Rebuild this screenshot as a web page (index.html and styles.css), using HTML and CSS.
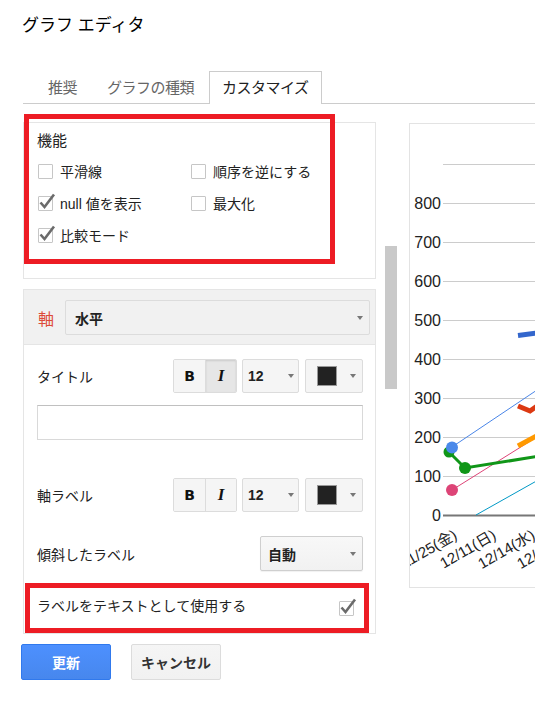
FILE: index.html
```html
<!DOCTYPE html>
<html lang="ja">
<head>
<meta charset="utf-8">
<title>グラフ エディタ</title>
<link rel="stylesheet" href="styles.css">
</head>
<body>
<div class="dialog">
  <h1 class="title">グラフ エディタ</h1>
  <div class="tabs">
    <div class="tab">推奨</div>
    <div class="tab">グラフの種類</div>
    <div class="tab active">カスタマイズ</div>
  </div>

  <div class="main">
    <div class="left">
      <section class="panel features">
        <div class="sec-title">機能</div>
        <div class="checks">
          <div class="check"><span class="box"></span><span>平滑線</span></div>
          <div class="check"><span class="box"></span><span>順序を逆にする</span></div>
          <div class="check"><span class="box"><svg class="tick" width="20" height="20" viewBox="0 0 20 20"><path d="M3.5 10.5 L7.5 15 L17 2.5"/></svg></span><span><span class="latin">null</span> 値を表示</span></div>
          <div class="check"><span class="box"></span><span>最大化</span></div>
          <div class="check"><span class="box"><svg class="tick" width="20" height="20" viewBox="0 0 20 20"><path d="M3.5 10.5 L7.5 15 L17 2.5"/></svg></span><span>比較モード</span></div>
        </div>
      </section>

      <section class="panel axis">
        <div class="axis-head">
          <span class="axis-label">軸</span>
          <div class="select wide"><span>水平</span><i class="arrow"></i></div>
        </div>
        <div class="axis-body">
          <div class="row">
            <span>タイトル</span>
            <div class="tools">
              <div class="btn-group">
                <span class="tbtn"><b class="glyph-b">B</b></span>
                <span class="tbtn pressed"><i class="glyph-i">I</i></span>
              </div>
              <div class="select size-sel"><span>12</span><i class="arrow"></i></div>
              <div class="select color-sel"><span class="swatch"></span><i class="arrow"></i></div>
            </div>
          </div>
          <div class="text-input"></div>
          <div class="row row-gap">
            <span>軸ラベル</span>
            <div class="tools">
              <div class="btn-group">
                <span class="tbtn"><b class="glyph-b">B</b></span>
                <span class="tbtn"><i class="glyph-i">I</i></span>
              </div>
              <div class="select size-sel"><span>12</span><i class="arrow"></i></div>
              <div class="select color-sel"><span class="swatch"></span><i class="arrow"></i></div>
            </div>
          </div>
          <div class="row row-slant">
            <span>傾斜したラベル</span>
            <div class="select slant-sel"><span>自動</span><i class="arrow"></i></div>
          </div>
          <div class="row row-check">
            <span>ラベルをテキストとして使用する</span>
            <span class="box box-end"><svg class="tick" width="20" height="20" viewBox="0 0 20 20"><path d="M3.5 10.5 L7.5 15 L17 2.5"/></svg></span>
          </div>
        </div>
      </section>
    </div>

    <div class="scrollbar"><div class="thumb"></div></div>

    <div class="chart">
      <svg class="chart-svg" width="198" height="463" viewBox="0 0 198 463">
        <g transform="translate(-410,-124)">
          <g class="grid">
            <line x1="443" x2="620" y1="164.5" y2="164.5"/>
            <line x1="443" x2="620" y1="203.5" y2="203.5"/>
            <line x1="443" x2="620" y1="242.5" y2="242.5"/>
            <line x1="443" x2="620" y1="281.5" y2="281.5"/>
            <line x1="443" x2="620" y1="320.5" y2="320.5"/>
            <line x1="443" x2="620" y1="359.5" y2="359.5"/>
            <line x1="443" x2="620" y1="398.5" y2="398.5"/>
            <line x1="443" x2="620" y1="437.5" y2="437.5"/>
            <line x1="443" x2="620" y1="476.5" y2="476.5"/>
          </g>
          <g class="ylabels">
            <text x="441" y="209">800</text>
            <text x="441" y="248">700</text>
            <text x="441" y="287">600</text>
            <text x="441" y="326">500</text>
            <text x="441" y="365">400</text>
            <text x="441" y="404">300</text>
            <text x="441" y="443">200</text>
            <text x="441" y="482">100</text>
            <text x="441" y="521">0</text>
          </g>
          <line class="zero" x1="443" x2="620" y1="515.5" y2="515.5"/>
          <path class="s-cyan" d="M476 515 L540 479"/>
          <path class="s-pink" d="M452 490 L540 435"/>
          <path class="s-lblue" d="M452 447 L540 388"/>
          <path class="s-green" d="M449 452 L465 468 L540 456"/>
          <path class="s-orange" d="M518 446 L540 434"/>
          <path class="s-red" d="M518 406 L530 411 L540 404"/>
          <path class="s-blue" d="M518 335.5 L540 332.5"/>
          <circle class="d-green" cx="449" cy="452" r="5.5"/>
          <circle class="d-green" cx="465" cy="468" r="6"/>
          <circle class="d-blue" cx="452" cy="447.5" r="6"/>
          <circle class="d-pink" cx="452" cy="490" r="6"/>
          <g class="xlabels">
            <text x="458" y="538" transform="rotate(-30 458 538)">11/25(金)</text>
            <text x="497" y="538" transform="rotate(-30 497 538)">12/11(日)</text>
            <text x="536" y="538" transform="rotate(-30 536 538)">12/14(水)</text>
            <text x="575" y="538" transform="rotate(-30 575 538)">12/17(土)</text>
          </g>
        </g>
      </svg>
    </div>
  </div>

  <div class="buttons">
    <div class="btn primary">更新</div>
    <div class="btn cancel">キャンセル</div>
  </div>

  <div class="mark mark-features"></div>
  <div class="mark mark-label"></div>
</div>
</body>
</html>
```

FILE: styles.css
```css
* { box-sizing: border-box; }
html, body { margin: 0; padding: 0; background: #fff; }
body {
  width: 535px;
  height: 702px;
  overflow: hidden;
  font-family: "Liberation Sans", "Noto Sans CJK JP", sans-serif;
  font-size: 14px;
  color: #222;
}
.dialog { position: relative; width: 535px; height: 702px; }

.title {
  margin: 0;
  padding: 14px 0 0 22px;
  font-size: 17px;
  font-weight: normal;
  line-height: 24px;
  color: #000;
}

.tabs {
  display: flex;
  margin: 33px 0 0 23px;
  padding-left: 10px;
  height: 33px;
  border-bottom: 1px solid #ccc;
}
.tab {
  height: 32px;
  line-height: 31px;
  padding: 0 14px;
  font-size: 15px;
  letter-spacing: -0.5px;
  color: #666;
  border: 1px solid transparent;
  border-bottom: none;
}
.tab.active {
  height: 33px;
  padding: 0 12px;
  background: #fff;
  border-color: #ccc;
  color: #222;
}

.main { display: flex; margin-top: 18px; height: 512px; }
.left { margin-left: 23px; width: 353px; height: 512px; overflow: hidden; flex: none; }
.scrollbar { margin-left: 9px; width: 12px; flex: none; }
.thumb { margin-top: 124px; height: 143px; background: #c9c9c9; }
.chart {
  margin-left: 12px;
  margin-top: 1px;
  width: 200px;
  height: 465px;
  border: 1px solid #e3e3e3;
  flex: none;
  background: #fff;
}
.chart-svg { display: block; }

.panel { border: 1px solid #e5e5e5; background: #fff; }
.features { height: 157px; padding: 8px 14px 0 14px; }
.sec-title { font-size: 15px; line-height: 20px; margin-left: -1px; }
.checks { display: grid; grid-template-columns: 153px 1fr; margin-top: 4px; }
.check { display: flex; align-items: center; gap: 7px; height: 32px; font-size: 14px; white-space: nowrap; }
.latin { font-family: "Liberation Sans", sans-serif; }

.box {
  position: relative;
  width: 15px;
  height: 15px;
  border: 1px solid #c6c6c6;
  border-radius: 1px;
  background: #fff;
  flex: none;
}
.tick { position: absolute; left: -2px; top: -5px; overflow: visible; }
.tick path { fill: none; stroke: #6b6b6b; stroke-width: 2.6; stroke-linejoin: miter; }

.axis { margin-top: 10px; height: 345px; }
.axis-head {
  display: flex;
  align-items: center;
  background: #f1f1f1;
  padding: 10px 5px 9px 14px;
  border-bottom: 1px solid #e5e5e5;
}
.axis-label { color: #dd4b39; font-size: 16px; width: 27px; flex: none; }

.select {
  display: flex;
  align-items: center;
  justify-content: space-between;
  height: 35px;
  border: 1px solid #dcdcdc;
  border-radius: 2px;
  background: #f1f1f1;
  padding: 0 6px 0 9px;
  font-weight: bold;
  font-size: 14px;
  color: #222;
}
.select.wide { flex: 1; }
.arrow {
  width: 0;
  height: 0;
  border-left: 3.5px solid transparent;
  border-right: 3.5px solid transparent;
  border-top: 4px solid #777;
}

.axis-body { padding: 14px 12px 0 13px; }
.row { display: flex; align-items: center; justify-content: space-between; height: 34px; white-space: nowrap; }
.tools { display: flex; align-items: stretch; height: 34px; }
.btn-group {
  display: flex;
  width: 64px;
  border: 1px solid #dcdcdc;
  border-radius: 2px;
  overflow: hidden;
}
.tbtn {
  width: 31px;
  display: flex;
  align-items: center;
  justify-content: center;
  background: #f5f5f5;
}
.tbtn + .tbtn { border-left: 1px solid #dcdcdc; width: 31px; }
.tbtn.pressed { background: #e6e6e6; box-shadow: inset 0 1px 2px rgba(0, 0, 0, 0.12); }
.glyph-b { font-family: "DejaVu Sans", sans-serif; font-weight: bold; font-size: 14px; color: #111; }
.glyph-i { font-family: "Liberation Serif", serif; font-weight: bold; font-style: italic; font-size: 17px; color: #111; }

.size-sel { width: 57px; height: 34px; margin-left: 5px; padding: 0 4px 0 5px; background: #f5f5f5; }
.color-sel { width: 58px; height: 34px; margin-left: 6px; padding: 0 6px 0 11px; background: #f5f5f5; }
.swatch { width: 20px; height: 20px; background: #222; border: 1px solid #999; }

.text-input {
  height: 35px;
  margin-top: 12px;
  border: 1px solid #d9d9d9;
  border-top-color: #c0c0c0;
  background: #fff;
}
.row-gap { margin-top: 38px; }
.row-slant { margin-top: 24px; height: 35px; }
.slant-sel {
  width: 103px;
  padding: 0 6px 0 7px;
  background: linear-gradient(#f8f8f8, #f1f1f1);
  border-color: #cfcfcf;
  box-shadow: 0 1px 1px rgba(0, 0, 0, 0.06);
}
.row-check { margin-top: 16px; height: 36px; }
.box-end { margin: 6px 9px 0 0; }

.buttons { display: flex; gap: 20px; margin: 10px 0 0 21px; }
.btn {
  width: 90px;
  height: 36px;
  border-radius: 2px;
  display: flex;
  align-items: center;
  justify-content: center;
  font-weight: bold;
  font-size: 14px;
}
.btn.primary { background: linear-gradient(#4d90fe, #4787ed); border: 1px solid #3079ed; color: #fff; }
.btn.cancel { background: linear-gradient(#f5f5f5, #f1f1f1); border: 1px solid #dcdcdc; color: #333; }

.grid line { stroke: #cccccc; stroke-width: 1; }
.zero { stroke: #777; stroke-width: 2; }
.ylabels text { font-family: "Liberation Sans", sans-serif; font-size: 16px; fill: #222; text-anchor: end; }
.xlabels text { font-family: "Liberation Sans", "Noto Sans CJK JP", sans-serif; font-size: 15px; fill: #222; text-anchor: end; }
.s-cyan { fill: none; stroke: #0099c6; stroke-width: 1; }
.s-pink { fill: none; stroke: #dd4477; stroke-width: 1; }
.s-lblue { fill: none; stroke: #4a86e8; stroke-width: 1; }
.s-green { fill: none; stroke: #109618; stroke-width: 3; }
.s-orange { fill: none; stroke: #ff9900; stroke-width: 5; }
.s-red { fill: none; stroke: #dc3912; stroke-width: 5; }
.s-blue { fill: none; stroke: #3366cc; stroke-width: 5; }
.d-green { fill: #109618; }
.d-blue { fill: #4a89ea; }
.d-pink { fill: #dd4477; }

.mark { position: absolute; border: 5px solid #ed1c24; pointer-events: none; }
.mark-features { left: 24px; top: 114px; width: 311px; height: 150px; }
.mark-label { left: 25px; top: 583px; width: 344px; height: 50px; }
```
